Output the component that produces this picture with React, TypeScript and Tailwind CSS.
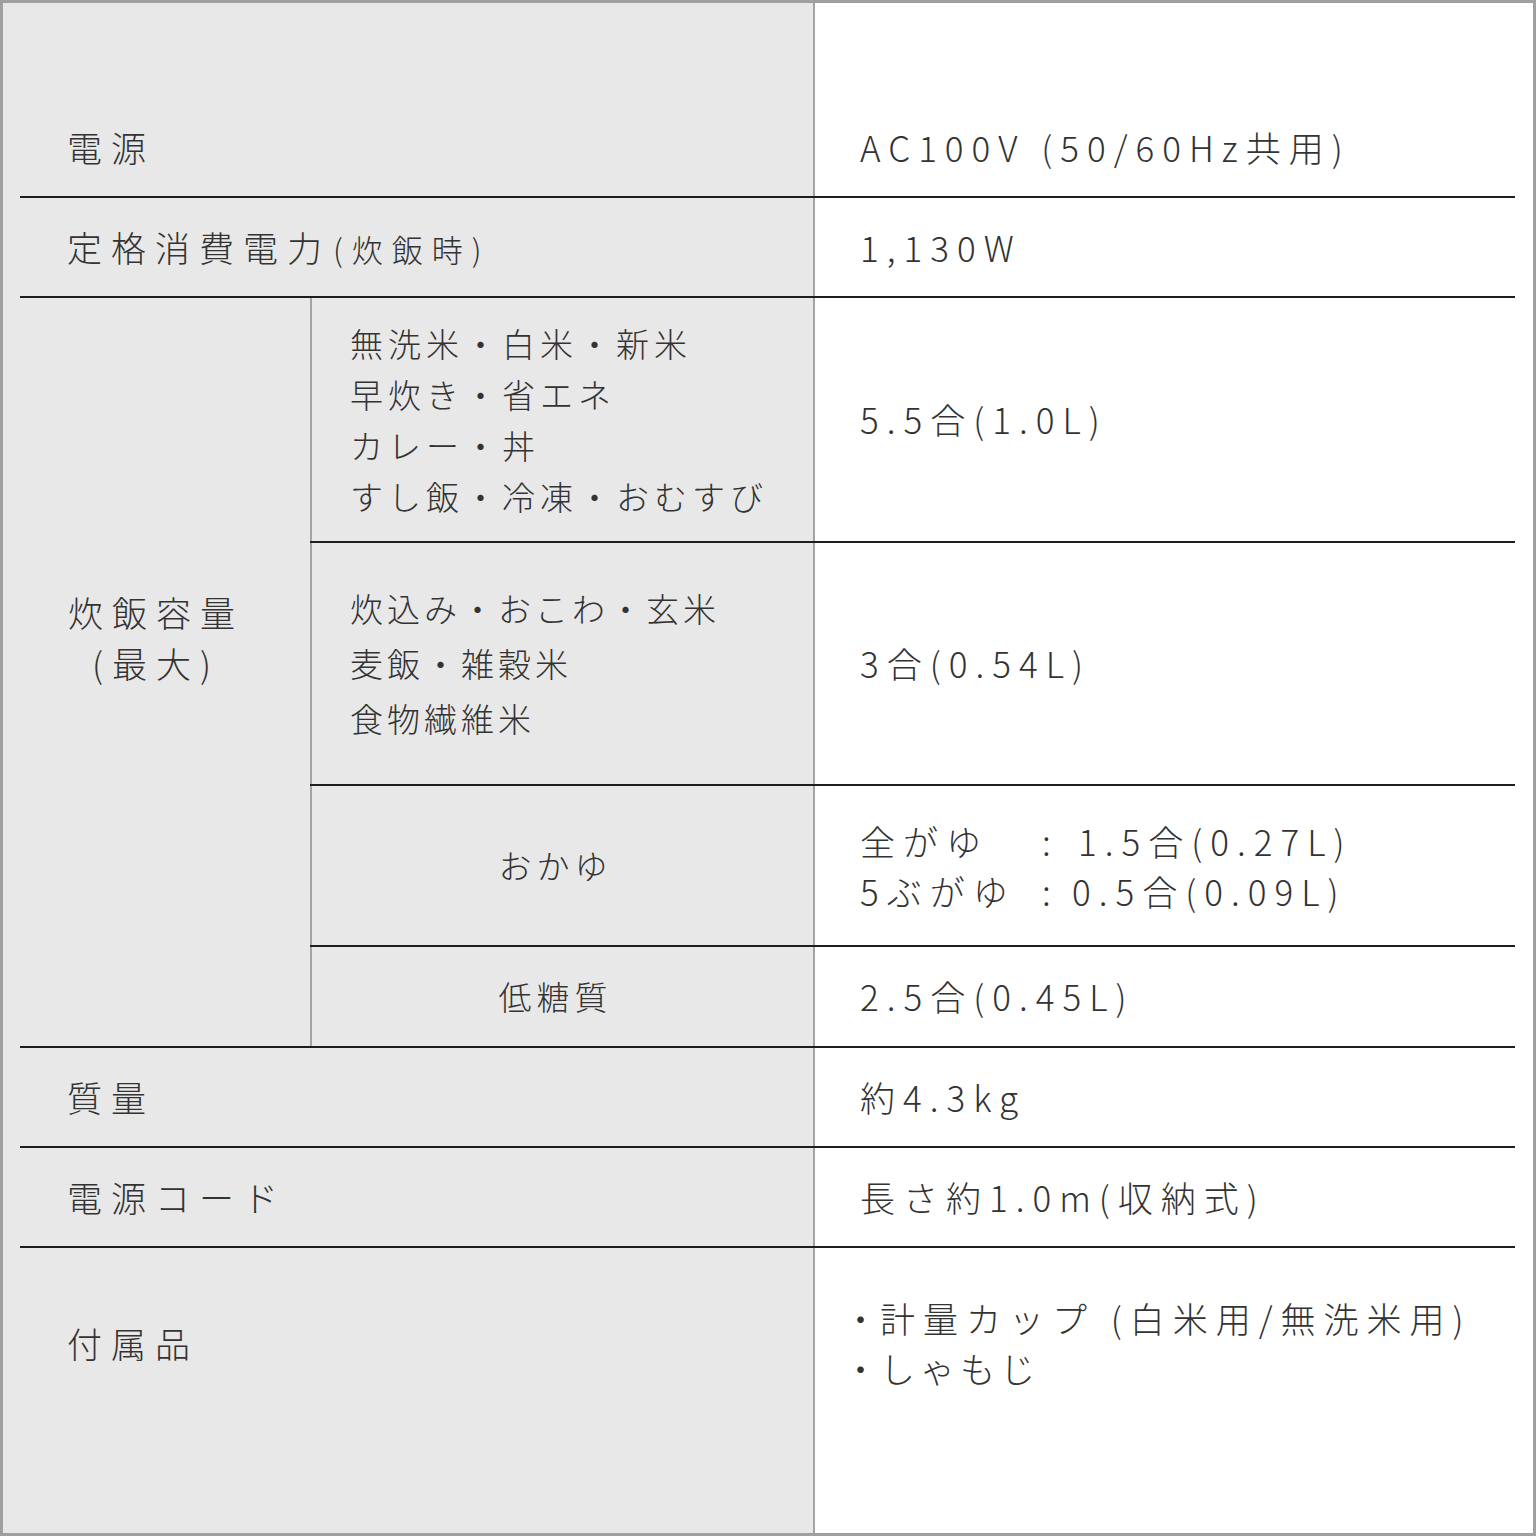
const font = { fontFamily: '"Noto Sans CJK JP", "Noto Sans", sans-serif' };

function Row({ label, value, h }: { label: React.ReactNode; value: React.ReactNode; h: string }) {
  return (
    <div className={`flex border-b-2 border-[#1e1e1e] ${h}`}>
      <div className="w-[793px] flex items-center pl-[47px] tracking-[9px]">{label}</div>
      <div className="flex-1 flex items-center pl-[47px]">{value}</div>
    </div>
  );
}

function SubRow({ label, value, h, center, last }: { label: React.ReactNode; value: React.ReactNode; h: string; center?: boolean; last?: boolean }) {
  return (
    <div className={`flex ${last ? '' : 'border-b-2 border-[#1e1e1e]'} ${h}`}>
      <div className={`w-[503px] border-l-2 border-[#a3a3a3] flex items-center ${center ? 'justify-center pr-[14px]' : 'pl-[38px]'}`}>
        {label}
      </div>
      <div className="flex-1 flex items-center pl-[47px]">{value}</div>
    </div>
  );
}

export default function App() {
  return (
    <div
      style={font}
      className="w-[1536px] h-[1536px] border-[3px] border-[#a0a0a0] bg-[linear-gradient(to_right,#e8e8e8_810px,#a3a3a3_810px,#a3a3a3_812px,#ffffff_812px)] flex flex-col pl-[17px] pr-[18px] text-[#333333] text-[35px] font-light tracking-[8px]"
    >
      <div className="h-[95px]" />

      <Row h="h-[100px]" label={<span>電源</span>} value={<span>AC100V (50/60Hz共用)</span>} />

      <Row
        h="h-[100px]"
        label={
          <span>
            定格消費電力<span className="text-[31px] tracking-[9px] ml-[2px]">(炊飯時)</span>
          </span>
        }
        value={<span>1,130W</span>}
      />

      <div className="flex h-[750px] border-b-2 border-[#1e1e1e]">
        <div className="w-[290px] flex items-center pl-[48px] pb-[70px]">
          <div className="text-center leading-[51px] tracking-[9px]">
            炊飯容量
            <br />
            (最大)
          </div>
        </div>
        <div className="flex-1 flex flex-col">
          <SubRow
            h="h-[245px]"
            label={
              <div className="text-[33px] tracking-[5px] leading-[51px]">
                無洗米・白米・新米
                <br />
                早炊き・省エネ
                <br />
                カレー・丼
                <br />
                すし飯・冷凍・おむすび
              </div>
            }
            value={<span>5.5合(1.0L)</span>}
          />
          <SubRow
            h="h-[243px]"
            label={
              <div className="text-[33px] tracking-[4px] leading-[55px]">
                炊込み・おこわ・玄米
                <br />
                麦飯・雑穀米
                <br />
                食物繊維米
              </div>
            }
            value={<span>3合(0.54L)</span>}
          />
          <SubRow
            h="h-[161px]"
            center
            label={<span className="text-[33px] tracking-[5px]">おかゆ</span>}
            value={
              <div className="leading-[50px]">
                <div className="flex">
                  <span className="w-[182px]">全がゆ</span>
                  <span className="w-[36px]">:</span>
                  <span>1.5合(0.27L)</span>
                </div>
                <div className="flex">
                  <span className="w-[182px]">5ぶがゆ</span>
                  <span className="w-[30px]">:</span>
                  <span>0.5合(0.09L)</span>
                </div>
              </div>
            }
          />
          <SubRow
            h="flex-1"
            last
            center
            label={<span className="text-[33px] tracking-[5px]">低糖質</span>}
            value={<span>2.5合(0.45L)</span>}
          />
        </div>
      </div>

      <Row h="h-[100px]" label={<span>質量</span>} value={<span>約4.3kg</span>} />
      <Row h="h-[100px]" label={<span>電源コード</span>} value={<span>長さ約1.0m(収納式)</span>} />

      <div className="flex h-[190px]">
        <div className="w-[793px] flex items-center pl-[47px] tracking-[9px]">付属品</div>
        <div className="flex-1 flex items-center pl-[47px]">
          <div className="leading-[50px]">
            <div>
              <span className="-ml-[17px] tracking-[2px]">・</span>計量カップ (白米用/無洗米用)
            </div>
            <div>
              <span className="-ml-[17px] tracking-[2px]">・</span>
              <span className="tracking-[5px]">しゃもじ</span>
            </div>
          </div>
        </div>
      </div>
    </div>
  );
}
